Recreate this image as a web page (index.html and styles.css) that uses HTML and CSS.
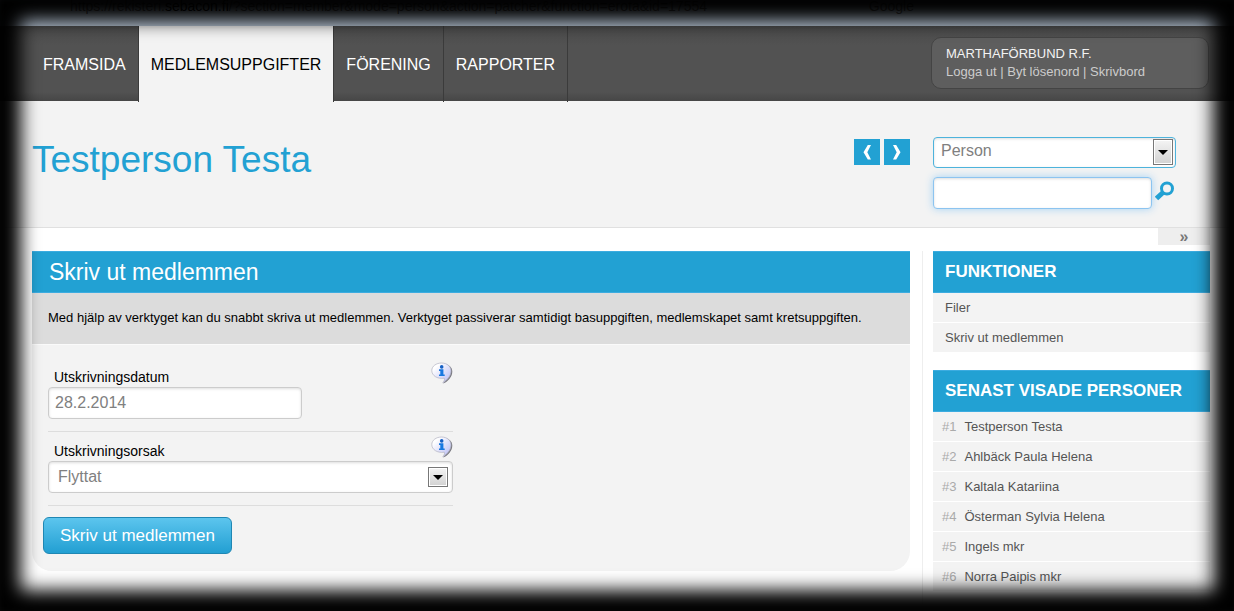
FILE: index.html
```html
<!DOCTYPE html>
<html lang="sv">
<head>
<meta charset="utf-8">
<title>Testperson Testa</title>
<link rel="stylesheet" href="styles.css">
</head>
<body>
<svg class="defs" aria-hidden="true">
  <defs>
    <linearGradient id="bubble" x1="0" y1="0" x2="1" y2="1">
      <stop offset="0.2" stop-color="#ffffff"/>
      <stop offset="1" stop-color="#b4b8f4"/>
    </linearGradient>
    <symbol id="info" viewBox="0 0 22 22">
      <path d="M13 2c5 .4 8.300 3.400 8.300 7.400 0 5-3.600 9.600-9.300 12.200 1.800-1.900 2.300-3.400 2.100-4.800z" fill="#77777e"/>
      <path d="M10.600 1C15.800 1 20 4.200 20 8.800c0 4.600-3 9-8.200 12 1.600-2 2-3.300 1.500-4.600C6.200 17.200.8 13.600.8 8.500.8 4.200 5.200 1 10.600 1z" fill="url(#bubble)" stroke="#b0b0c0" stroke-width=".7"/>
      <circle cx="10.700" cy="4.900" r="1.800" fill="#1560c4"/>
      <path d="M8 7.300h4.400v5.100h1.300v1.600H8v-1.600h1.300V8.900H8z" fill="#1878e0"/>
    </symbol>
  </defs>
</svg>

<div class="browser-bar">
  <span class="address">https://rekisteri.<b>sebacon.fi</b>/?section=member&amp;mode=person&amp;action=patcher&amp;function=erota&amp;id=17554</span>
  <span class="engine">Google</span>
</div>

<header class="topbar">
  <nav class="tabs">
    <a href="#">FRAMSIDA</a>
    <a href="#" class="active">MEDLEMSUPPGIFTER</a>
    <a href="#">FÖRENING</a>
    <a href="#">RAPPORTER</a>
  </nav>
  <div class="account">
    <div class="account-name">MARTHAFÖRBUND R.F.</div>
    <div><a href="#">Logga ut</a> | <a href="#">Byt lösenord</a> | <a href="#">Skrivbord</a></div>
  </div>
</header>

<section class="person-head">
  <h1>Testperson Testa</h1>
  <div class="pager">
    <button type="button" aria-label="Föregående"><svg viewBox="0 0 26 26"><path d="M13.800 6H17l-3.700 7.200L17 20.500h-3.200L9.500 13.200z"/></svg></button>
    <button type="button" aria-label="Nästa"><svg viewBox="0 0 26 26"><path d="M12.200 6H9l3.700 7.200L9 20.500h3.200l4.300-7.300z"/></svg></button>
  </div>
  <form class="search">
    <div class="select select-search">
      <select aria-label="Sök bland"><option>Person</option></select>
      <span class="arrow"></span>
    </div>
    <div class="search-row">
      <input type="text" aria-label="Sökord">
      <button type="button" aria-label="Sök"><svg viewBox="0 0 20 20"><circle cx="12" cy="7.500" r="5.500"/><path d="M8 11.500l-6.500 6"/></svg></button>
    </div>
  </form>
</section>

<div class="collapse-row"><button type="button" class="collapse" aria-label="Dölj sidofältet">»</button></div>

<div class="columns">
  <main class="panel">
    <h2>Skriv ut medlemmen</h2>
    <p class="intro">Med hjälp av verktyget kan du snabbt skriva ut medlemmen. Verktyget passiverar samtidigt basuppgiften, medlemskapet samt kretsuppgiften.</p>
    <form class="form">
      <div class="field">
        <div class="field-head"><label for="date">Utskrivningsdatum</label><svg class="info"><use href="#info"/></svg></div>
        <input id="date" type="text" value="28.2.2014">
      </div>
      <div class="field">
        <div class="field-head"><label for="reason">Utskrivningsorsak</label><svg class="info"><use href="#info"/></svg></div>
        <div class="select">
          <select id="reason"><option>Flyttat</option></select>
          <span class="arrow"></span>
        </div>
      </div>
      <button type="button" class="submit">Skriv ut medlemmen</button>
    </form>
  </main>

  <aside class="sidebar">
    <section>
      <h3>FUNKTIONER</h3>
      <ul>
        <li><a href="#">Filer</a></li>
        <li><a href="#">Skriv ut medlemmen</a></li>
      </ul>
    </section>
    <section>
      <h3>SENAST VISADE PERSONER</h3>
      <ul class="recent">
        <li><span>#1</span><a href="#">Testperson Testa</a></li>
        <li><span>#2</span><a href="#">Ahlbäck Paula Helena</a></li>
        <li><span>#3</span><a href="#">Kaltala Katariina</a></li>
        <li><span>#4</span><a href="#">Österman Sylvia Helena</a></li>
        <li><span>#5</span><a href="#">Ingels mkr</a></li>
        <li><span>#6</span><a href="#">Norra Paipis mkr</a></li>
      </ul>
    </section>
  </aside>
</div>
<div class="vignette"></div>
</body>
</html>
```

FILE: styles.css
```css
* { box-sizing: border-box; }

body {
  margin: 0;
  height: 100vh;
  overflow: hidden;
  background: #fff;
  color: #111;
  font: 13px/18px "Liberation Sans", Arial, sans-serif;
}

a { color: inherit; text-decoration: none; }
button, input, select { font: inherit; margin: 0; }
h1, h2, h3, p, ul { margin: 0; padding: 0; }
ul { list-style: none; }

.defs { position: absolute; width: 0; height: 0; }

.vignette {
  position: fixed;
  inset: 0;
  pointer-events: none;
  box-shadow: inset 0 0 18px 21px #000;
}

.browser-bar {
  display: flex;
  justify-content: space-between;
  height: 26px;
  padding: 0 320px 0 70px;
  background: #b8c6d6;
  color: #555;
  font-size: 14px;
  line-height: 12px;
}
.address b { color: #000; font-weight: normal; }

.topbar {
  display: flex;
  justify-content: space-between;
  align-items: flex-start;
  height: 75px;
  padding: 0 25px 0 31px;
  background: linear-gradient(#4d4d4d, #525252 20px, #525252 66px, #464646);
}
.tabs { display: flex; height: 76px; }
.tabs a {
  padding: 0 12px;
  border-right: 1px solid #3b3b3b;
  color: #fff;
  font-size: 16px;
  line-height: 78px;
}
.tabs .active { background: #f3f3f3; color: #000; }

.account {
  width: 278px;
  margin-top: 11px;
  padding: 7px 14px;
  border: 1px solid #444;
  border-radius: 10px;
  background: #5e5e5e;
  color: #ccc;
}
.account-name { color: #f3f3f3; }

.person-head {
  display: flex;
  align-items: flex-start;
  height: 127px;
  padding: 36px 24px 0 32px;
  border-bottom: 1px solid #e0e0e0;
  background: #f3f3f3;
}
h1 {
  flex: 1;
  color: #22a1d3;
  font-size: 37px;
  font-weight: normal;
  line-height: 46px;
}
.pager { display: flex; gap: 4px; margin: 2px 23px 0 0; }
.pager button {
  width: 26px;
  height: 26px;
  padding: 0;
  border: 0;
  background: #22a1d3;
}
.pager svg { display: block; width: 26px; height: 26px; fill: #fff; }

.search { width: 277px; }
.search-row { display: flex; align-items: flex-start; gap: 3px; margin-top: 9px; }
.search-row button { padding: 4px 0 0; border: 0; background: none; }
.search-row svg { display: block; width: 20px; height: 20px; fill: none; stroke: #22a1d3; stroke-width: 3; }
.search-row path { stroke-width: 5; }

input, select {
  height: 32px;
  padding: 0 6px;
  border: 1px solid #ccc;
  border-radius: 4px;
  background: #fff;
  box-shadow: inset 0 1px 3px #ddd;
  color: #808080;
  font-size: 16px;
  outline: 0;
}
.search-row input {
  width: 219px;
  border-color: #8cc4f0;
  box-shadow: 0 0 8px #a5d3f5, inset 0 1px 3px #ddd;
}
.select { position: relative; }
.select select { display: block; width: 100%; padding: 0 9px; appearance: none; }
.arrow {
  position: absolute;
  right: 5px;
  top: 6px;
  bottom: 6px;
  width: 20px;
  display: grid;
  place-items: center;
  border: 1px solid #777;
  background: linear-gradient(#f4f4f4, #d2d2d2);
  box-shadow: inset 0 0 0 1px #fff;
  pointer-events: none;
}
.arrow::after {
  content: "";
  border: 5px solid transparent;
  border-top-color: #000;
  border-bottom: 0;
}
.select-search { width: 243px; }
.select-search select { height: 31px; padding: 0 7px 4px; border-color: #4db3dc; }
.select-search .arrow { right: 3px; top: 2px; bottom: 3px; }

.collapse-row { display: flex; justify-content: flex-end; height: 23px; padding-right: 24px; }
.collapse {
  width: 52px;
  height: 17px;
  padding: 0;
  border: 0;
  background: #eee;
  color: #777;
  font-size: 16px;
  font-weight: bold;
  line-height: 16px;
}

.columns {
  display: grid;
  grid-template-columns: 1fr 288px;
  gap: 12px;
  align-items: start;
  padding: 0 24px 0 32px;
}
.panel { border-radius: 0 0 20px 20px; background: #f3f3f3; }
h2, h3 { background: #22a1d3; color: #fff; border: 1px solid #3cace0; border-width: 1px 0; }
h2 { padding: 0 17px; font-size: 23px; font-weight: normal; line-height: 40px; }
.intro {
  padding: 16px 16px 17px;
  border-bottom: 1px solid #fafafa;
  background: #dcdcdc;
  color: #000;
}
.form { padding: 17px 16px; }
.field {
  width: 405px;
  margin-bottom: 4px;
  padding-bottom: 12px;
  border-bottom: 1px solid #ddd;
}
.field-head { display: flex; justify-content: space-between; height: 25px; padding-left: 6px; }
.field-head label { padding-top: 6px; color: #000; font-size: 14px; }
.info { width: 22px; height: 22px; }
.field input { display: block; width: 254px; }
.submit {
  display: block;
  height: 37px;
  margin: 11px 0 0 -5px;
  padding: 0 16px;
  border: 1px solid #1f87b3;
  border-radius: 6px;
  background: linear-gradient(#5cc5ee, #229fd2);
  color: #fff;
  font-size: 17px;
}

.sidebar {
  display: grid;
  align-content: start;
  gap: 17px;
  padding-left: 10px;
  border-left: 1px solid #eee;
  min-height: 360px;
}
h3 { padding: 0 12px; font-size: 17px; line-height: 40px; }
.sidebar li {
  display: flex;
  height: 30px;
  padding: 0 12px;
  border-bottom: 1px solid #fff;
  background: #f3f3f3;
  color: #555;
  line-height: 30px;
}
.sidebar .recent li { padding: 0 9px; gap: 8px; }
.recent span { color: #aaa; }
```
